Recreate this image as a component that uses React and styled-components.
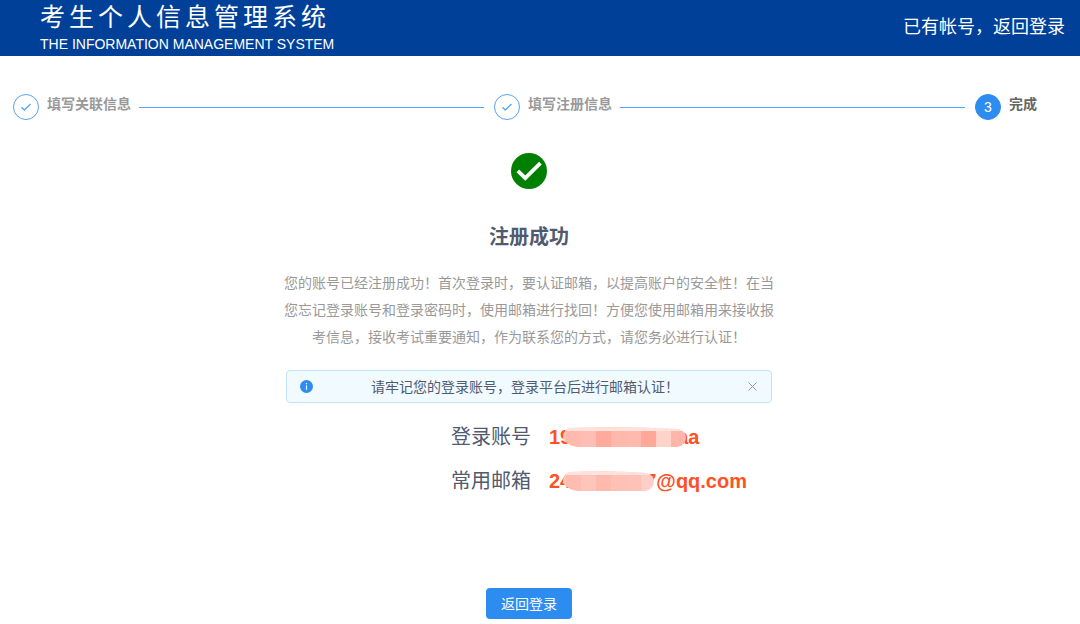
import React from 'react';
import styled, { createGlobalStyle } from 'styled-components';

const GlobalStyle = createGlobalStyle`
  * {
    box-sizing: border-box;
  }

  body {
    margin: 0;
    background: #fff;
    color: #515a6e;
    font-family: "Liberation Sans", "Noto Sans CJK SC", sans-serif;
    font-size: 14px;
    line-height: 20px;
  }
`;

const Header = styled.header`
  display: flex;
  justify-content: space-between;
  align-items: flex-start;
  height: 56px;
  padding: 0 15px 0 40px;
  background: #004098;
  color: #fff;
`;

const Brand = styled.div`
  display: flex;
  flex-direction: column;
`;

const BrandName = styled.h1`
  margin: 0;
  font-size: 25px;
  font-weight: 400;
  line-height: 35px;
  letter-spacing: 4px;
`;

const BrandSub = styled.span`
  font-size: 14px;
  line-height: 18px;
`;

const LoginLink = styled.a`
  color: #fff;
  font-size: 18px;
  line-height: 54px;
  text-decoration: none;
`;

const Main = styled.main`
  padding: 38px 35px 0 13px;
`;

const Steps = styled.ol`
  display: flex;
  margin: 0;
  padding: 0;
  list-style: none;
`;

const Step = styled.li`
  display: flex;
  flex: ${({ $last }) => ($last ? '0 0 70px' : '1')};
  gap: 8px;
`;

const StepIcon = styled.span`
  display: flex;
  flex: none;
  align-items: center;
  justify-content: center;
  width: 26px;
  height: 26px;
  border: 1px solid ${({ $active }) => ($active ? '#2d8cf0' : '#57a3f3')};
  border-radius: 50%;
  background: ${({ $active }) => ($active ? '#2d8cf0' : '#fff')};
  color: ${({ $active }) => ($active ? '#fff' : '#57a3f3')};
`;

const StepTitle = styled.span`
  color: ${({ $active }) => ($active ? '#666' : '#999')};
  font-weight: 700;
  white-space: nowrap;
`;

const StepLine = styled.span`
  flex: 1;
  height: 1px;
  margin: 13px 10px 0 0;
  background: #57a3f3;
`;

const Result = styled.section`
  display: flex;
  flex-direction: column;
  align-items: center;
  padding-top: 33px;
`;

const ResultTitle = styled.h2`
  margin: 34px 0 19px;
  font-size: 20px;
  line-height: 28px;
`;

const Description = styled.p`
  width: 490px;
  max-width: 100%;
  margin: 0;
  color: #999;
  line-height: 27px;
  text-align: center;
`;

const Alert = styled.div`
  display: flex;
  align-items: center;
  width: 486px;
  max-width: 100%;
  height: 33px;
  margin: 19px 0 12px;
  padding: 0 13px;
  border: 1px solid #c0e4fc;
  border-radius: 4px;
  background: #f0faff;
`;

const AlertText = styled.span`
  flex: 1;
  padding-right: 10px;
  text-align: center;
`;

const CloseButton = styled.button`
  display: flex;
  padding: 0;
  border: 0;
  background: none;
  color: #999;
  cursor: pointer;
`;

const AccountList = styled.dl`
  display: grid;
  grid-template-columns: 80px 200px;
  column-gap: 18px;
  margin: 0;
  padding-left: 142px;
  font-size: 20px;
  line-height: 44px;
`;

const AccountLabel = styled.dt``;

const AccountValue = styled.dd`
  display: flex;
  align-items: center;
  margin: 0;
  color: #ff5126;
  font-weight: 700;
`;

const Mosaic = styled.svg`
  position: relative;
  flex: none;
  margin: 0 -9px;
`;

const BackButton = styled.button`
  height: 31px;
  margin-top: 85px;
  padding: 0 15px;
  border: 0;
  border-radius: 4px;
  background: #2d8cf0;
  color: #fff;
  font: inherit;
  cursor: pointer;
`;

const steps = ['填写关联信息', '填写注册信息', '完成'];

const StepCheck = () => (
  <svg width="12" height="12" viewBox="0 0 12 12" fill="none" aria-hidden="true">
    <path d="M1.5 6.2 4.3 9 10.5 3" stroke="currentColor" strokeWidth="1.3" />
  </svg>
);

const SuccessIcon = () => (
  <svg width="36" height="36" viewBox="0 0 36 36" aria-hidden="true">
    <circle cx="18" cy="18" r="18" fill="#008000" />
    <path d="M6.8 17.8 14.3 25.2 29.4 10.2" fill="none" stroke="#fff" strokeWidth="3.8" />
  </svg>
);

const InfoIcon = () => (
  <svg width="13" height="13" viewBox="0 0 13 13" aria-hidden="true">
    <circle cx="6.5" cy="6.5" r="6.5" fill="#2d8cf0" />
    <path d="M6.5 5.5v4.3M6.5 3v1.3" stroke="#fff" strokeWidth="1.2" />
  </svg>
);

const CloseIcon = () => (
  <svg width="11" height="11" viewBox="0 0 11 11" aria-hidden="true">
    <path d="m1.5 1.5 8 8m0-8-8 8" stroke="currentColor" strokeWidth="1" />
  </svg>
);

const accountTones = ['#ffc4ba', '#ffb9ad', '#ffbeb3', '#ffaa9d', '#ffb8ac', '#ffb9ad', '#ffa89a', '#ffd2ca', '#ffb5a9'];
const emailTones = ['#ffc8be', '#ffbdb1', '#ffc4ba', '#ffb9ad', '#ffc0b5', '#ffc2b7', '#ffcfc7'];

// hides the middle of an account or an address
const Censor = ({ id, width, tones }) => (
  <Mosaic width={width} height="20" aria-hidden="true">
    <clipPath id={id}>
      <path d={`M8 1Q${width / 2} -1 ${width - 8} 2Q${width} 4 ${width} 11Q${width - 1} 19 ${width - 9} 20H16Q6 19 1 12Q1 2 8 1Z`} />
    </clipPath>
    <g clipPath={`url(#${id})`}>
      {tones.map((tone, i) => (
        <rect key={i} x={i * 15 - 11} width="15" height="20" fill={tone} />
      ))}
      <rect width={width} height="4" fill="#ffe2dc" />
    </g>
  </Mosaic>
);

const App = () => {
  return (
    <>
      <GlobalStyle />
      <Header>
        <Brand>
          <BrandName>考生个人信息管理系统</BrandName>
          <BrandSub>THE INFORMATION MANAGEMENT SYSTEM</BrandSub>
        </Brand>
        <LoginLink href="#login">已有帐号，返回登录</LoginLink>
      </Header>

      <Main>
        <Steps>
          {steps.map((title, i) => {
            const last = i === steps.length - 1;
            return (
              <Step key={title} $last={last}>
                <StepIcon $active={last}>{last ? i + 1 : <StepCheck />}</StepIcon>
                <StepTitle $active={last}>{title}</StepTitle>
                {!last && <StepLine />}
              </Step>
            );
          })}
        </Steps>

        <Result>
          <SuccessIcon />
          <ResultTitle>注册成功</ResultTitle>
          <Description>
            您的账号已经注册成功！首次登录时，要认证邮箱，以提高账户的安全性！在当您忘记登录账号和登录密码时，使用邮箱进行找回！方便您使用邮箱用来接收报考信息，接收考试重要通知，作为联系您的方式，请您务必进行认证！
          </Description>
          <Alert role="status">
            <InfoIcon />
            <AlertText>请牢记您的登录账号，登录平台后进行邮箱认证！</AlertText>
            <CloseButton type="button" aria-label="关闭">
              <CloseIcon />
            </CloseButton>
          </Alert>
          <AccountList>
            <AccountLabel>登录账号</AccountLabel>
            <AccountValue>
              19<Censor id="account" width={124} tones={accountTones} />aa
            </AccountValue>
            <AccountLabel>常用邮箱</AccountLabel>
            <AccountValue>
              24<Censor id="email" width={92} tones={emailTones} />7@qq.com
            </AccountValue>
          </AccountList>
          <BackButton type="button">返回登录</BackButton>
        </Result>
      </Main>
    </>
  );
};

export default App;
